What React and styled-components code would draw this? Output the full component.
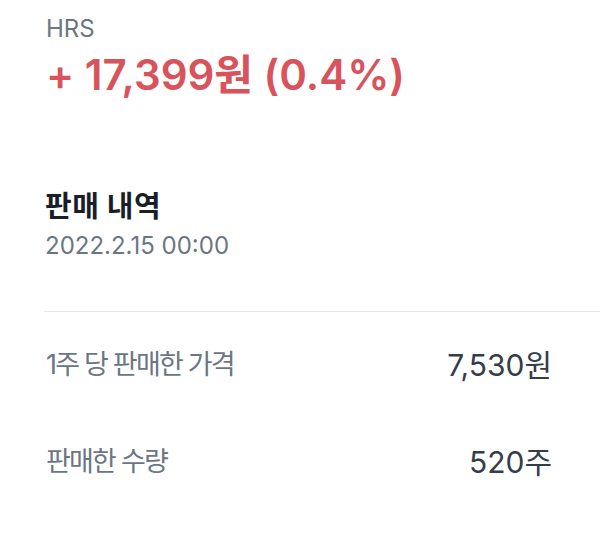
import React from 'react';
import styled, { createGlobalStyle } from 'styled-components';

const GlobalStyle = createGlobalStyle`
  body {
    margin: 0;
    background: #ffffff;
    font-family: "Inter", "Noto Sans CJK KR", sans-serif;
  }
`

const Page = styled.div`
  width: 600px;
  height: 548px;
  overflow: hidden;
  background: #ffffff;
`

const Summary = styled.div`
  padding: 14px 0 0 46px;
`

const Ticker = styled.div`
  color: #6b7684;
  font-size: 24px;
  line-height: 30px;
`

const Profit = styled.div`
  margin-top: 6px;
  color: #d8535b;
  font-size: 42px;
  font-weight: 600;
  line-height: 50px;
`

const History = styled.div`
  margin-top: 89px;
  padding-left: 45px;
`

const Title = styled.div`
  color: #191f28;
  font-size: 29px;
  font-weight: 700;
  line-height: 36px;
  letter-spacing: 0.5px;
`

const Date = styled.div`
  margin-top: 4px;
  color: #6b7684;
  font-size: 24px;
  line-height: 34px;
`

const Divider = styled.div`
  margin: 48px 0 0 44px;
  height: 1px;
  background: #e5e8eb;
`

const Rows = styled.div`
  padding: 2px 48px 0 46px;
`

const Row = styled.div`
  display: flex;
  align-items: center;
  justify-content: space-between;
  height: 97px;
`

const Label = styled.span`
  color: #6b7684;
  font-size: 27px;
  letter-spacing: -1.8px;
`

const Value = styled.span`
  color: #333d4b;
  font-size: 30px;
`

const rows = [
  ['1주 당 판매한 가격', '7,530원'],
  ['판매한 수량', '520주'],
]

export default function App() {
  return (
    <Page>
      <GlobalStyle />
      <Summary>
        <Ticker>HRS</Ticker>
        <Profit>+ 17,399원 (0.4%)</Profit>
      </Summary>
      <History>
        <Title>판매 내역</Title>
        <Date>2022.2.15 00:00</Date>
      </History>
      <Divider />
      <Rows>
        {rows.map(([label, value]) => (
          <Row key={label}>
            <Label>{label}</Label>
            <Value>{value}</Value>
          </Row>
        ))}
      </Rows>
    </Page>
  );
}
